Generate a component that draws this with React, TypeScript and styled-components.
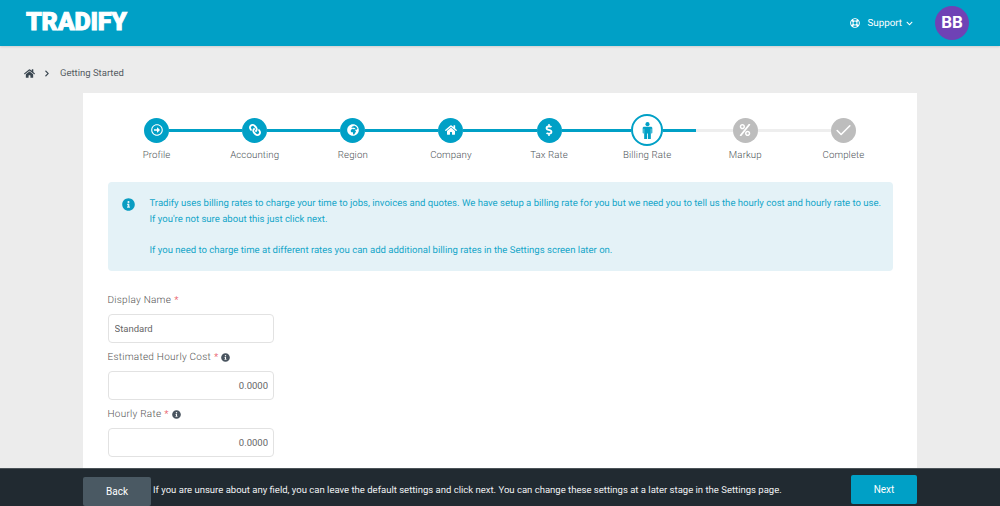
import React from "react";
import styled, { createGlobalStyle } from "styled-components";
import { Check } from "lucide-react";
import {
    FaChevronDown,
    FaChevronRight,
    FaDollarSign,
    FaGlobeAfrica,
    FaHome,
    FaInfoCircle,
    FaLink,
    FaPercent,
    FaRegArrowAltCircleRight,
    FaRegLifeRing,
} from "react-icons/fa";

const GlobalStyle = createGlobalStyle`
    html, body {
        margin: 0;
        height: 100%;
        overflow: hidden;
    }
    body {
        font-family: Roboto, "Liberation Sans", sans-serif;
        background: #ececec;
        text-rendering: geometricPrecision;
    }
    * {
        box-sizing: border-box;
    }
`;

const Page = styled.div`
    height: 506px;
    display: flex;
    flex-direction: column;
    overflow: hidden;
`;

const Header = styled.header`
    flex: none;
    height: 46px;
    background: #00a0c6;
    box-shadow: 0 1px 2px rgba(0, 0, 0, 0.12);
    display: flex;
    align-items: center;
    justify-content: space-between;
    padding: 0 31px 1px 26px;
    color: #fff;
`;

const Logo = styled.div`
    font-family: Roboto, sans-serif;
    font-weight: 900;
    font-size: 25px;
    line-height: 1;
    letter-spacing: -0.2px;
    -webkit-text-stroke: 0.9px #fff;
`;

const HeaderRight = styled.div`
    display: flex;
    align-items: center;
`;

const Support = styled.div`
    display: flex;
    align-items: center;
    font-size: 9.8px;
    margin-right: 22px;
    padding-top: 1px;
    svg:first-child {
        width: 10px;
        height: 10px;
        margin-right: 7px;
    }
    svg:last-child {
        width: 7px;
        height: 7px;
        margin-left: 4px;
    }
`;

const Avatar = styled.div`
    width: 34px;
    height: 34px;
    border-radius: 50%;
    background: #6f42b5;
    font-size: 17px;
    font-weight: 700;
    display: flex;
    align-items: center;
    justify-content: center;
`;

const Breadcrumb = styled.nav`
    flex: none;
    height: 47px;
    padding: 7px 0 0 24px;
    display: flex;
    align-items: center;
    font-size: 9.5px;
    color: #555c63;
    svg:first-child {
        width: 11px;
        height: 11px;
        color: #3a4650;
    }
    svg:nth-child(2) {
        width: 6px;
        height: 7px;
        margin: 0 10px 0 9px;
        color: #3a4650;
    }
`;

const Card = styled.main`
    flex: 1;
    min-height: 0;
    width: 834px;
    margin: 0 auto;
    background: #fff;
    padding: 21px 24.5px 0;
    overflow: hidden;
`;

const Steps = styled.ol`
    list-style: none;
    margin: 0;
    padding: 0;
    display: grid;
    grid-template-columns: repeat(8, 1fr);
`;

const Step = styled.li`
    display: flex;
    flex-direction: column;
    align-items: center;
`;

const Track = styled.div`
    width: 100%;
    height: 32px;
    display: flex;
    align-items: center;
`;

const Segment = styled.span<{ $tone: "done" | "todo" | "none" }>`
    flex: 1;
    height: 3px;
    background: ${(props) =>
        props.$tone === "done"
            ? "#00a0c6"
            : props.$tone === "todo"
              ? "#eeeeee"
              : "transparent"};
`;

const Circle = styled.span<{ $state: "done" | "active" | "todo" }>`
    flex: none;
    border-radius: 50%;
    display: flex;
    align-items: center;
    justify-content: center;
    width: ${(props) => (props.$state === "active" ? "32px" : "25px")};
    height: ${(props) => (props.$state === "active" ? "32px" : "25px")};
    background: ${(props) =>
        props.$state === "done"
            ? "#00a0c6"
            : props.$state === "todo"
              ? "#bdbdbd"
              : "#fff"};
    border: ${(props) =>
        props.$state === "active" ? "2px solid #00a0c6" : "none"};
    color: ${(props) => (props.$state === "active" ? "#00a0c6" : "#fff")};
    svg {
        width: ${(props) => (props.$state === "active" ? "17px" : "12px")};
        height: ${(props) => (props.$state === "active" ? "17px" : "12px")};
    }
`;

const MirroredLink = styled(FaLink)`
    transform: scaleX(-1);
`;

const CheckMark = styled(Check)`
    && {
        width: 19px;
        height: 19px;
    }
`;

const StepLabel = styled.span`
    margin-top: 3px;
    font-size: 9.7px;
    line-height: 14px;
    font-weight: 300;
    color: #4e5459;
    letter-spacing: 0.1px;
`;

const Notice = styled.div`
    margin-top: 19px;
    height: 89px;
    background: #e4f2f7;
    border-radius: 4px;
    padding: 14px 10px 0 14px;
    display: flex;
    color: #15a6c9;
    svg {
        flex: none;
        width: 13px;
        height: 13px;
        margin-top: 2px;
        margin-right: 15px;
        color: #0a9dc2;
    }
`;

const NoticeText = styled.div`
    font-size: 9.55px;
    line-height: 15.5px;
`;

const Form = styled.form`
    margin-top: 20px;
    width: 167px;
`;

const Field = styled.div`
    height: 57px;
`;

const Label = styled.label`
    display: flex;
    align-items: center;
    height: 18px;
    font-size: 10px;
    font-weight: 300;
    color: #555;
    letter-spacing: 0.25px;
    white-space: nowrap;
    svg {
        width: 9px;
        height: 9px;
        margin-left: 3px;
        color: #4a5560;
    }
`;

const Required = styled.span`
    color: #e8505b;
    margin-left: 3px;
`;

const Input = styled.input<{ $numeric?: boolean }>`
    display: block;
    width: 166.5px;
    height: 29px;
    margin-top: 5px;
    padding: 0 5px 0 6px;
    border: 1px solid #e2e2e2;
    border-radius: 4px;
    background: #fff;
    font-family: inherit;
    font-size: 9.5px;
    color: #666;
    outline: none;
    text-align: ${(props) => (props.$numeric ? "right" : "left")};
`;

const Footer = styled.footer`
    flex: none;
    height: 38px;
    background: #212a31;
    border-top: 1px solid #4b5358;
`;

const FooterInner = styled.div`
    width: 834px;
    margin: 0 auto;
    height: 100%;
    display: flex;
    align-items: flex-start;
    color: #fff;
`;

const BackButton = styled.button`
    width: 68px;
    height: 29px;
    margin-top: 8px;
    border: none;
    border-radius: 2px;
    background: #4a5963;
    color: #fff;
    font-family: inherit;
    font-size: 10px;
`;

const FooterText = styled.span`
    flex: 1;
    margin-left: 2px;
    margin-top: 15px;
    font-size: 9.53px;
    line-height: 14px;
    color: #eef0f1;
`;

const NextButton = styled.button`
    width: 66px;
    height: 29px;
    margin-top: 6px;
    border: none;
    border-radius: 2px;
    background: #00a0c6;
    color: #fff;
    font-family: inherit;
    font-size: 10px;
`;

// stockier than the FaMale glyph, closer to the reference figure
function PersonIcon() {
    return (
        <svg viewBox="0 0 16 24" fill="currentColor" aria-hidden="true">
            <circle cx="8" cy="3" r="2.9" />
            <path d="M3.2 6.6h9.6c1.1 0 2 .9 2 2V15c0 .6-.5 1.1-1.1 1.1h-.4V9.4h-.6v14.6H8.6v-7.6h-1.2V24H3.3V9.4h-.6v6.7h-.4c-.6 0-1.1-.5-1.1-1.1V8.6c0-1.1.9-2 2-2z" />
        </svg>
    );
}

const steps = [
    { label: "Profile", icon: <FaRegArrowAltCircleRight /> },
    { label: "Accounting", icon: <MirroredLink /> },
    { label: "Region", icon: <FaGlobeAfrica /> },
    { label: "Company", icon: <FaHome /> },
    { label: "Tax Rate", icon: <FaDollarSign /> },
    { label: "Billing Rate", icon: <PersonIcon /> },
    { label: "Markup", icon: <FaPercent /> },
    { label: "Complete", icon: <CheckMark strokeWidth={2} /> },
];

const activeStep = 5;

export default function App() {
    return (
        <Page>
            <GlobalStyle />
            <Header>
                <Logo>TRADIFY</Logo>
                <HeaderRight>
                    <Support>
                        <FaRegLifeRing />
                        Support
                        <FaChevronDown />
                    </Support>
                    <Avatar>BB</Avatar>
                </HeaderRight>
            </Header>
            <Breadcrumb>
                <FaHome />
                <FaChevronRight />
                Getting Started
            </Breadcrumb>
            <Card>
                <Steps>
                    {steps.map((step, i) => (
                        <Step key={step.label}>
                            <Track>
                                <Segment
                                    $tone={
                                        i === 0
                                            ? "none"
                                            : i <= activeStep
                                              ? "done"
                                              : "todo"
                                    }
                                />
                                <Circle
                                    $state={
                                        i < activeStep
                                            ? "done"
                                            : i === activeStep
                                              ? "active"
                                              : "todo"
                                    }
                                >
                                    {step.icon}
                                </Circle>
                                <Segment
                                    $tone={
                                        i === steps.length - 1
                                            ? "none"
                                            : i <= activeStep
                                              ? "done"
                                              : "todo"
                                    }
                                />
                            </Track>
                            <StepLabel>{step.label}</StepLabel>
                        </Step>
                    ))}
                </Steps>
                <Notice>
                    <FaInfoCircle />
                    <NoticeText>
                        Tradify uses billing rates to charge your time to jobs,
                        invoices and quotes. We have setup a billing rate for
                        you but we need you to tell us the hourly cost and
                        hourly rate to use.
                        <br />
                        If you're not sure about this just click next.
                        <br />
                        <br />
                        If you need to charge time at different rates you can
                        add additional billing rates in the Settings screen
                        later on.
                    </NoticeText>
                </Notice>
                <Form>
                    <Field>
                        <Label>
                            Display Name<Required>*</Required>
                        </Label>
                        <Input defaultValue="Standard" />
                    </Field>
                    <Field>
                        <Label>
                            Estimated Hourly Cost<Required>*</Required>
                            <FaInfoCircle />
                        </Label>
                        <Input $numeric defaultValue="0.0000" />
                    </Field>
                    <Field>
                        <Label>
                            Hourly Rate<Required>*</Required>
                            <FaInfoCircle />
                        </Label>
                        <Input $numeric defaultValue="0.0000" />
                    </Field>
                </Form>
            </Card>
            <Footer>
                <FooterInner>
                    <BackButton type="button">Back</BackButton>
                    <FooterText>
                        If you are unsure about any field, you can leave the
                        default settings and click next. You can change these
                        settings at a later stage in the Settings page.
                    </FooterText>
                    <NextButton type="button">Next</NextButton>
                </FooterInner>
            </Footer>
        </Page>
    );
}
